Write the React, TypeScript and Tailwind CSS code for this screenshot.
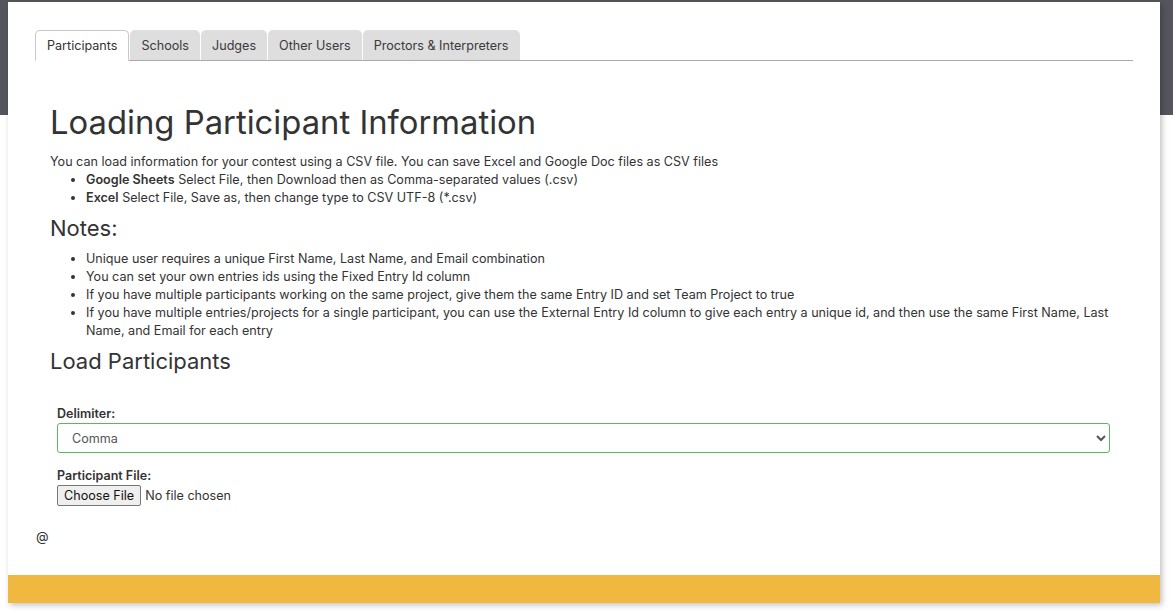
const tabs = ["Participants", "Schools", "Judges", "Other Users", "Proctors & Interpreters"];

const notes = [
  "Unique user requires a unique First Name, Last Name, and Email combination",
  "You can set your own entries ids using the Fixed Entry Id column",
  "If you have multiple participants working on the same project, give them the same Entry ID and set Team Project to true",
  "If you have multiple entries/projects for a single participant, you can use the External Entry Id column to give each entry a unique id, and then use the same First Name, Last Name, and Email for each entry",
];

export default function App() {
  return (
    <div className="h-[612px] bg-white text-[#333] font-['Inter',sans-serif] text-[12.6px] overflow-hidden">
      <div className="h-[115px] bg-[#55555d]" />

      <div className="relative -mt-[113px] ml-2 mr-[13px] bg-white shadow-[2px_2px_6px_rgba(0,0,0,0.25)] flex flex-col h-[601px]">
        <div className="px-[27px] pt-[28px] flex-1">
          <Tabs />

          <div className="pl-[15px] pr-[10px]">
            <h1 className="text-[32.8px] leading-[42px] mt-[40px] mb-[10px]">Loading Participant Information</h1>
            <p className="leading-[18px]">
              You can load information for your contest using a CSV file. You can save Excel and Google Doc files as
              CSV files
            </p>
            <ul className="list-disc pl-[36px] leading-[18px]">
              <li>
                <b className="font-semibold">Google Sheets</b> Select File, then Download then as Comma-separated values
                (.csv)
              </li>
              <li>
                <b className="font-semibold">Excel</b> Select File, Save as, then change type to CSV UTF-8 (*.csv)
              </li>
            </ul>

            <h2 className="text-[22px] leading-[28px] mt-[7px] mb-[8px]">Notes:</h2>
            <ul className="list-disc pl-[36px] leading-[18px]">
              {notes.map((n) => (
                <li key={n}>{n}</li>
              ))}
            </ul>

            <h2 className="text-[22px] leading-[28px] mt-[7px]">Load Participants</h2>

            <div className="pl-[7px] pr-[13px] mt-[30px]">
              <label className="block font-semibold text-[12.5px] leading-[18px]">Delimiter:</label>
              <select className="block w-full h-[30px] border border-[#5cb85c] rounded-[3px] px-[10px] text-[#555] bg-white outline-none">
                <option>Comma</option>
                <option>Semicolon</option>
                <option>Tab</option>
              </select>

              <label className="block font-semibold text-[12.5px] leading-[18px] mt-[14px]">Participant File:</label>
              <input
                type="file"
                className="block text-[12.6px] leading-[17px] file:mr-[4px] file:bg-[#efefef] file:border file:border-[#767676] file:rounded-[2px] file:px-[6px] file:py-[1px] file:text-[#111]"
              />
            </div>
          </div>
        </div>

        <div className="pl-[28px] pb-[30px] leading-[18px] text-[13px]">@</div>
        <div className="h-[28px] bg-[#f1b840]" />
      </div>
    </div>
  );
}

function Tabs() {
  return (
    <div className="flex items-end gap-[1px] border-b border-[#aaa]">
      {tabs.map((t, i) =>
        i === 0 ? (
          <div
            key={t}
            className="h-[31px] -mb-px px-[11px] flex items-center pt-[2px] bg-white border border-[#c8c8c8] border-b-white rounded-t-[5px]"
          >
            {t}
          </div>
        ) : (
          <div key={t} className="h-[30px] px-[11px] flex items-center pt-[3px] bg-[#dedede] rounded-t-[5px] text-[#3a3a3a]">
            {t}
          </div>
        )
      )}
    </div>
  );
}
